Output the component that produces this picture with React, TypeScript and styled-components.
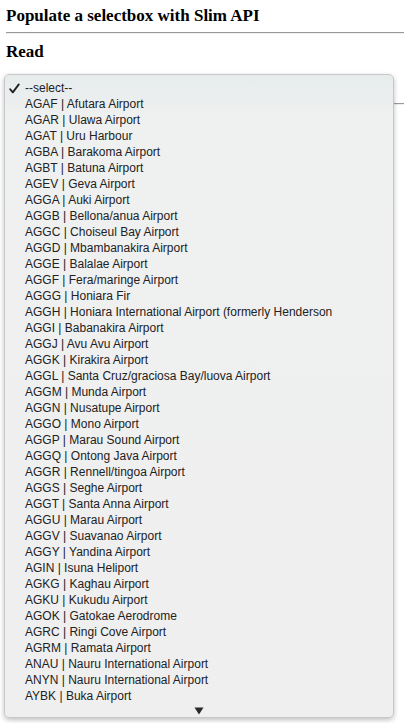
import React from "react";
import styled, { createGlobalStyle } from "styled-components";

const Global = createGlobalStyle`
  html, body { margin: 0; padding: 0; background: #fff; }
  body { font-family: "Liberation Serif", "Times New Roman", serif; color: #000; }
`;

const Page = styled.div`
  position: relative;
  padding: 0 0 0 6px;
  height: 723px;
  overflow: hidden;
`;

const Title = styled.h3`
  margin: 0;
  padding-top: 6px;
  font-size: 17px;
  font-weight: bold;
  line-height: 20px;
`;

const Rule = styled.hr<{ $top: number }>`
  margin: ${(p) => p.$top}px 0 0 0;
  border: 0;
  border-top: 1px solid #9a9a9a;
  border-bottom: 1px solid #eee;
  height: 0;
`;

const Sub = styled.h3`
  margin: 8px 0 0 0;
  font-size: 17px;
  font-weight: bold;
  line-height: 20px;
`;

const Menu = styled.div`
  position: absolute;
  left: 4px;
  top: 74px;
  width: 390px;
  height: 644px;
  box-sizing: border-box;
  border-radius: 5px;
  border: 1px solid #c8c8c8;
  background: linear-gradient(#e6ecec 0px, #eff0f0 40px, #efefef 100%);
  box-shadow: 0 2px 5px rgba(0, 0, 0, 0.25);
  padding-top: 5px;
  font-family: "Liberation Sans", Arial, sans-serif;
  font-size: 12px;
  color: #222;
  display: flex;
  flex-direction: column;
`;

const Item = styled.div`
  height: 16px;
  line-height: 16px;
  display: flex;
  align-items: center;
  white-space: nowrap;
`;

const Check = styled.span`
  width: 20px;
  padding-left: 4px;
  box-sizing: border-box;
  display: flex;
  align-items: center;
`;

const Arrow = styled.div`
  display: flex;
  justify-content: center;
  padding-top: 3px;
`;

const CheckIcon = () => (
  <svg width="11" height="11" viewBox="0 0 11 11">
    <path d="M1.2 6.2 L3.8 9.4 L9.8 1.4" fill="none" stroke="#1e1e1e" strokeWidth="1.8" strokeLinecap="round" strokeLinejoin="round" />
  </svg>
);

const DownIcon = () => (
  <svg width="10" height="8" viewBox="0 0 10 8">
    <path d="M0.5 0.5 L9.5 0.5 L5 7.5 Z" fill="#2a2a2a" />
  </svg>
);

const items = [
  "AGAF | Afutara Airport",
  "AGAR | Ulawa Airport",
  "AGAT | Uru Harbour",
  "AGBA | Barakoma Airport",
  "AGBT | Batuna Airport",
  "AGEV | Geva Airport",
  "AGGA | Auki Airport",
  "AGGB | Bellona/anua Airport",
  "AGGC | Choiseul Bay Airport",
  "AGGD | Mbambanakira Airport",
  "AGGE | Balalae Airport",
  "AGGF | Fera/maringe Airport",
  "AGGG | Honiara Fir",
  "AGGH | Honiara International Airport (formerly Henderson",
  "AGGI | Babanakira Airport",
  "AGGJ | Avu Avu Airport",
  "AGGK | Kirakira Airport",
  "AGGL | Santa Cruz/graciosa Bay/luova Airport",
  "AGGM | Munda Airport",
  "AGGN | Nusatupe Airport",
  "AGGO | Mono Airport",
  "AGGP | Marau Sound Airport",
  "AGGQ | Ontong Java Airport",
  "AGGR | Rennell/tingoa Airport",
  "AGGS | Seghe Airport",
  "AGGT | Santa Anna Airport",
  "AGGU | Marau Airport",
  "AGGV | Suavanao Airport",
  "AGGY | Yandina Airport",
  "AGIN | Isuna Heliport",
  "AGKG | Kaghau Airport",
  "AGKU | Kukudu Airport",
  "AGOK | Gatokae Aerodrome",
  "AGRC | Ringi Cove Airport",
  "AGRM | Ramata Airport",
  "ANAU | Nauru International Airport",
  "ANYN | Nauru International Airport",
  "AYBK | Buka Airport",
];

export default function App() {
  return (
    <>
      <Global />
      <Page>
        <Title>Populate a selectbox with Slim API</Title>
        <Rule $top={6} />
        <Sub>Read</Sub>
        <Rule $top={41} />
        <Menu>
          <Item>
            <Check>
              <CheckIcon />
            </Check>
            --select--
          </Item>
          {items.map((t) => (
            <Item key={t}>
              <Check />
              {t}
            </Item>
          ))}
          <Arrow>
            <DownIcon />
          </Arrow>
        </Menu>
      </Page>
    </>
  );
}
